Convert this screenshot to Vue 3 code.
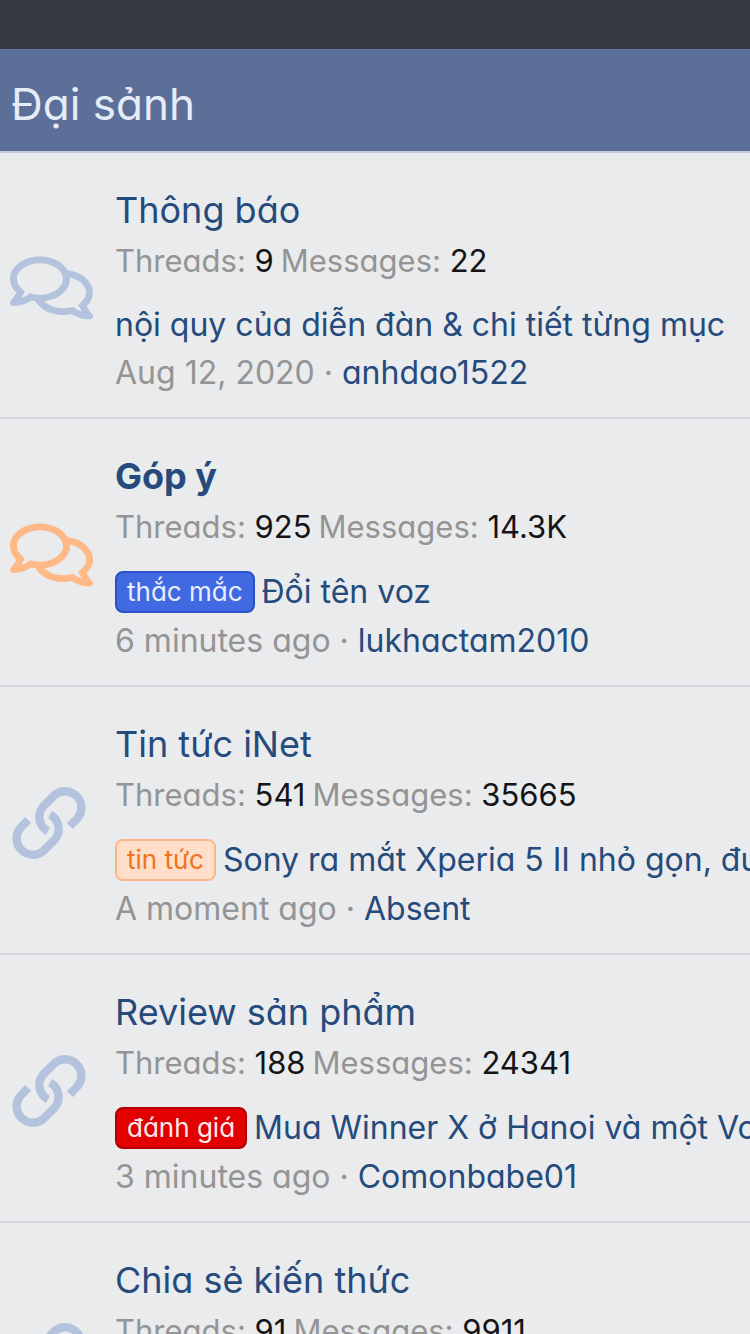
<script setup>
const forums = [
  {
    title: 'Thông báo', icon: 'comments', threads: '9', messages: '22',
    latest: 'nội quy của diễn đàn & chi tiết từng mục', time: 'Aug 12, 2020', user: 'anhdao1522',
  },
  {
    title: 'Góp ý', icon: 'comments', unread: true, threads: '925', messages: '14.3K',
    label: 'thắc mắc', tone: 'blue', latest: 'Đổi tên voz', time: '6 minutes ago', user: 'lukhactam2010',
  },
  {
    title: 'Tin tức iNet', icon: 'link', threads: '541', messages: '35665',
    label: 'tin tức', tone: 'orange', latest: 'Sony ra mắt Xperia 5 II nhỏ gọn, đư', time: 'A moment ago', user: 'Absent',
  },
  {
    title: 'Review sản phẩm', icon: 'link', threads: '188', messages: '24341',
    label: 'đánh giá', tone: 'red', latest: 'Mua Winner X ở Hanoi và một Vo', time: '3 minutes ago', user: 'Comonbabe01',
  },
  {
    title: 'Chia sẻ kiến thức', icon: 'link', threads: '91', messages: '9911',
  },
]
</script>

<template>
  <div class="page">
    <div class="topbar"></div>
    <main>
      <h2 class="category"><a href="#">Đại sảnh</a></h2>
      <article v-for="forum in forums" :key="forum.title" class="node" :class="{ unread: forum.unread }">
        <div class="node-icon">
          <svg v-if="forum.icon === 'comments'" class="comments" viewBox="0 0 576 512" preserveAspectRatio="none" aria-hidden="true">
            <path d="M532 386.2c27.5-27.1 44-61.1 44-98.2 0-80-76.5-146.1-176.2-157.9C368.3 72.5 294.3 32 208 32 93.1 32 0 103.6 0 192c0 37 16.5 71 44 98.2-15.3 30.7-37.3 54.5-37.7 54.9-6.3 6.7-8.1 16.5-4.4 25 3.6 8.5 12 14 21.2 14 53.5 0 96.7-20.2 125.2-38.8 9.2 2.1 18.7 3.7 28.4 4.9C208.1 407.6 281.8 448 368 448c20.8 0 40.8-2.4 59.8-6.8C456.3 459.7 499.4 480 553 480c9.2 0 17.5-5.5 21.2-14 3.6-8.5 1.9-18.3-4.4-25-.4-.3-22.5-24.1-37.8-54.8zm-392.8-92.3L122.1 305c-14.1 9.1-28.5 16.3-43.1 21.4 2.7-4.7 5.4-9.7 8-14.8l15.5-31.1L77.7 256C64.2 242.6 48 220.7 48 192c0-60.7 73.3-112 160-112s160 51.3 160 112-73.3 112-160 112c-16.5 0-33-1.9-49-5.6l-19.8-4.5zM498.3 352l-24.7 24.4 15.5 31.1c2.6 5.1 5.3 10.1 8 14.8-14.6-5.1-29-12.3-43.1-21.4l-17.1-11.1-19.9 4.6c-16 3.7-32.5 5.6-49 5.6-54 0-102.2-20.1-131.3-49.7C338 339.5 416 272.9 416 192c0-3.4-.4-6.7-.7-10C479.7 196.5 528 238.8 528 288c0 28.7-16.2 50.6-29.7 64z" />
          </svg>
          <svg v-else class="link" viewBox="36 48 224 224" aria-hidden="true">
            <path d="M208 169L231 145A47 47 0 0 0 165 79L131 113A47 47 0 0 0 145 184" />
            <path d="M88 151L65 175A47 47 0 0 0 131 241L165 207A47 47 0 0 0 151 136" />
          </svg>
        </div>
        <div class="node-body">
          <h3 class="node-title"><a href="#">{{ forum.title }}</a></h3>
          <div class="stats">
            <span>Threads: <b>{{ forum.threads }}</b></span>
            <span>Messages: <b>{{ forum.messages }}</b></span>
          </div>
          <div v-if="forum.latest" class="latest" :class="{ tagged: forum.label }">
            <span v-if="forum.label" class="label" :class="forum.tone">{{ forum.label }}</span>
            <a href="#">{{ forum.latest }}</a>
          </div>
          <div v-if="forum.user" class="meta">{{ forum.time }} · <a href="#">{{ forum.user }}</a></div>
        </div>
      </article>
    </main>
  </div>
</template>

<style>
body {
  margin: 0;
  background: #eaebed;
}
</style>

<style scoped>
.page {
  height: 100vh;
  overflow: hidden;
  background: #eaebed;
  color: #949494;
  font-family: Inter, "Noto Sans", sans-serif;
  font-feature-settings: "cv11";
  font-size: 32px;
}
a {
  color: #254a7c;
  text-decoration: none;
}
.topbar {
  height: 49px;
  background: #353841;
}
.category {
  margin: 0;
  padding: 25px 11px 17px;
  border-bottom: 2px solid #c4c9dc;
  background: #5c6f99;
  font-size: 44px;
  font-weight: 400;
  line-height: 60px;
}
.category a {
  color: #e6ebf8;
}
.node {
  display: flex;
  box-sizing: border-box;
  border-bottom: 2px solid #d3d5d8;
}
.node:last-child {
  min-height: 268px;
}
.node-icon {
  display: flex;
  flex: none;
  align-items: center;
  width: 106px;
  padding: 6px 0 0 10px;
  box-sizing: border-box;
  color: #b3c3de;
}
.unread .node-icon {
  color: #ffb987;
}
.comments {
  width: 83px;
  height: 72px;
  fill: currentColor;
}
.link {
  width: 78px;
  height: 78px;
  fill: none;
  stroke: currentColor;
  stroke-width: 24;
}
.node-body {
  flex: 1;
  min-width: 0;
  padding: 30px 0 20px 9px;
  overflow: hidden;
  white-space: nowrap;
}
.node-title {
  margin: 0;
  font-size: 36px;
  font-weight: 400;
  line-height: 54px;
}
.unread .node-title {
  font-weight: 700;
}
.stats {
  display: flex;
  gap: 7px;
  font-size: 31px;
  line-height: 48px;
}
.stats b {
  color: #141416;
  font-weight: 400;
}
.latest {
  display: flex;
  align-items: center;
  gap: 7px;
  margin-top: 16px;
  line-height: 48px;
}
.tagged {
  line-height: 50px;
}
.label {
  padding: 0 10px;
  border: 2px solid;
  border-radius: 8px;
  font-size: 26px;
  line-height: 38px;
}
.blue {
  border-color: #2b50c8;
  background: #4169e1;
  color: #e8eefc;
}
.orange {
  border-color: #fbb58c;
  background: #ffdfc9;
  color: #ee7420;
}
.red {
  border-color: #b00008;
  background: #e20000;
  color: #fdeaea;
}
.meta {
  line-height: 48px;
}
</style>
